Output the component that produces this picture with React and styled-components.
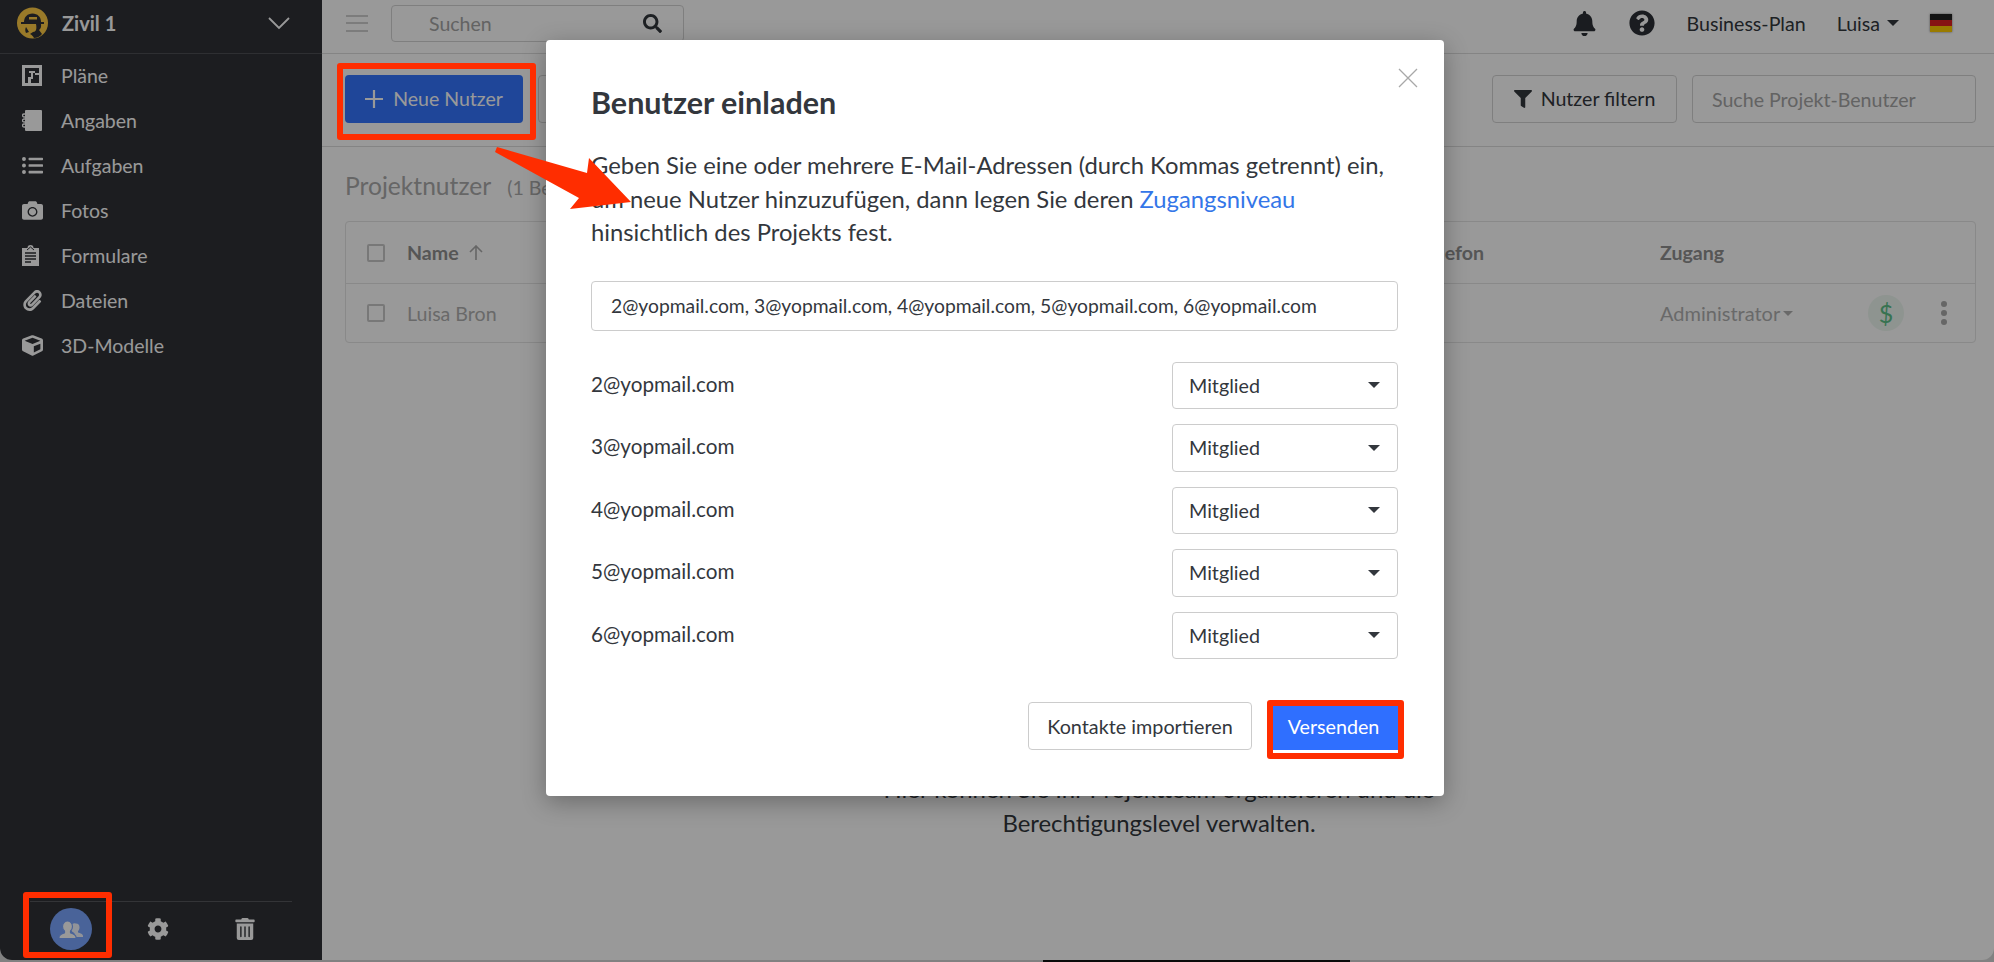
import React from 'react';
import styled, { createGlobalStyle } from 'styled-components';
import { FaCamera, FaListUl, FaPaperclip, FaCube, FaBell, FaQuestionCircle, FaFilter, FaSearch, FaCog, FaTrashAlt } from 'react-icons/fa';

const Global = createGlobalStyle`
  html, body { margin: 0; padding: 0; height: 100%; background: #d8d8d8; overflow: hidden; }
  * { box-sizing: border-box; }
  body { font-family: Lato, "Noto Sans", sans-serif; color: #33373d; }
`;

const Screen = styled.div`
  position: relative;
  width: 1994px;
  height: 962px;
  overflow: hidden;
`;
const Window = styled.div`
  display: flex;
  height: 960px;
  background: #fff;
  border-radius: 0 0 12px 12px;
  overflow: hidden;
`;
const BottomStrip = styled.div`
  height: 2px;
  padding-left: 1043px;
`;
const BottomSegment = styled.div`
  width: 307px;
  height: 2px;
  background: #111;
`;

const Sidebar = styled.aside`
  width: 322px;
  flex: none;
  background: #2f3136;
  color: #fff;
  display: flex;
  flex-direction: column;
`;
const SideHead = styled.div`
  height: 54px;
  flex: none;
  display: flex;
  align-items: center;
  padding: 0 32px 7px 17px;
  border-bottom: 1px solid #4d4f54;
`;
const ProjectName = styled.div`
  margin-left: 14px;
  flex: 1;
  font-size: 20px;
  font-weight: 700;
`;
const Menu = styled.nav`
  display: flex;
  flex-direction: column;
  flex: 1;
  margin-top: -1px;
`;
const MenuItem = styled.div`
  height: 45px;
  display: flex;
  align-items: center;
  font-size: 19.5px;
`;
const MenuIcon = styled.span`
  width: 61px;
  padding-left: 22px;
  display: flex;
  align-items: center;
  font-size: 21px;
`;
const SideFoot = styled.div`
  margin: 0 30px 1px;
  height: 58px;
  padding-bottom: 3px;
  border-top: 1px solid #55575c;
  display: flex;
  align-items: center;
`;
const FootSlot = styled.div`
  width: 87px;
  margin-left: ${p => p.$first ? '-3px' : '0'};
  display: flex;
  justify-content: center;
  font-size: 22px;
`;
const AvatarCircle = styled.div`
  width: 42px;
  height: 42px;
  border-radius: 50%;
  background: #7aa5ff;
  display: flex;
  align-items: center;
  justify-content: center;
`;

const Main = styled.main`
  flex: 1;
  min-width: 0;
  display: flex;
  flex-direction: column;
`;
const TopBar = styled.header`
  height: 54px;
  flex: none;
  display: flex;
  align-items: center;
  padding: 0 42px 7px 24px;
  border-bottom: 1px solid #dcdcdc;
`;
const Burger = styled.div`
  width: 22px;
  height: 17px;
  border-top: 2px solid #cfcfcf;
  border-bottom: 2px solid #cfcfcf;
  position: relative;
  &::after {
    content: '';
    position: absolute;
    left: 0;
    right: 0;
    top: 5.5px;
    height: 2px;
    background: #cfcfcf;
  }
`;
const TopSearch = styled.div`
  margin-left: 23px;
  width: 293px;
  height: 37px;
  border: 1px solid #d4d4d4;
  border-radius: 4px;
  display: flex;
  align-items: center;
  justify-content: space-between;
  padding: 0 21px 0 37px;
  font-size: 19.5px;
  color: #a5a5a5;
  background: #fff;
  svg { color: #33373d; font-size: 19px; }
`;
const Spacer = styled.div`
  flex: 1;
`;
const TopIcon = styled.span`
  display: flex;
  color: #2c3036;
  font-size: ${p => p.$size}px;
  margin-right: ${p => p.$gap}px;
`;
const TopLink = styled.span`
  font-size: 19.6px;
  color: #33373d;
  display: flex;
  align-items: center;
  margin-right: ${p => p.$gap || 0}px;
`;
const Caret = styled.span`
  display: inline-block;
  width: 0;
  height: 0;
  border-left: ${p => p.$size || 6}px solid transparent;
  border-right: ${p => p.$size || 6}px solid transparent;
  border-top: ${p => p.$size || 6}px solid ${p => p.$color || '#33373d'};
  margin-left: ${p => p.$gap ?? 7}px;
`;
const Flag = styled.div`
  width: 22px;
  height: 18px;
  margin-left: 31px;
  background: linear-gradient(#222 0 33%, #e02020 33% 66%, #ffce00 66%);
  box-shadow: 0 0 2px rgba(0,0,0,.5);
`;

const Toolbar = styled.div`
  height: 93px;
  flex: none;
  display: flex;
  align-items: center;
  padding: 0 18px 3px 23px;
  border-bottom: 1px solid #dcdcdc;
`;
const PrimaryBtn = styled.div`
  height: 48px;
  width: 178px;
  border-radius: 4px;
  background: #3476ff;
  color: #fff;
  font-size: 19.5px;
  display: flex;
  align-items: center;
  justify-content: center;
  gap: 10px;
`;
const OutlineBtn = styled.div`
  height: 48px;
  width: 185px;
  border: 1px solid #d4d4d4;
  border-radius: 4px;
  display: flex;
  align-items: center;
  justify-content: center;
  gap: 9px;
  font-size: 19.6px;
  color: #33373d;
  margin-left: ${p => p.$gap || 0}px;
`;
const SearchField = styled.div`
  width: 284px;
  height: 48px;
  margin-left: 15px;
  border: 1px solid #d4d4d4;
  border-radius: 4px;
  display: flex;
  align-items: center;
  padding: 2px 19px 0;
  font-size: 19.6px;
  color: #a5a5a5;
`;

const Content = styled.div`
  flex: 1;
  padding: 0 18px 0 23px;
  display: flex;
  flex-direction: column;
`;
const SectionHead = styled.div`
  height: 74px;
  display: flex;
  align-items: center;
  padding-top: 3px;
`;
const SectionTitle = styled.div`
  font-size: 24.6px;
  color: #aaa;
`;
const SectionCount = styled.div`
  font-size: 19.6px;
  color: #aaa;
  margin-left: 16px;
  padding-top: 3px;
`;
const Table = styled.div`
  border: 1px solid #e4e4e4;
  border-radius: 4px;
`;
const TableRow = styled.div`
  display: grid;
  grid-template-columns: 61px 1013px 240px 1fr;
  align-items: center;
  height: ${p => p.$h}px;
  font-size: 19.6px;
  color: ${p => p.$head ? '#8f8f8f' : '#b0b0b0'};
  font-weight: ${p => p.$head ? 700 : 400};
  border-bottom: ${p => p.$head ? '1px solid #e4e4e4' : 'none'};
`;
const Check = styled.div`
  width: 18px;
  height: 18px;
  margin-left: 21px;
  border: 2px solid #c8c8c8;
  border-radius: 2px;
`;
const NameCell = styled.div`
  display: flex;
  align-items: center;
  gap: 10px;
`;
const AccessCell = styled.div`
  display: flex;
  align-items: center;
`;
const AccessLabel = styled.div`
  width: 208px;
  display: flex;
  align-items: center;
  font-weight: 400;
  font-size: 20px;
`;
const DollarBadge = styled.div`
  width: 36px;
  height: 36px;
  border-radius: 50%;
  background: #edf7f0;
  color: #5cc088;
  display: flex;
  align-items: center;
  justify-content: center;
  font-size: 25px;
`;
const Dots = styled.div`
  margin-left: 37px;
  display: flex;
  flex-direction: column;
  gap: 3px;
`;
const Dot = styled.span`
  width: 6px;
  height: 6px;
  border-radius: 50%;
  background: #aaa;
`;
const EmptyText = styled.div`
  margin-top: 429px;
  margin-left: 464px;
  width: 700px;
  text-align: center;
  font-size: 23.9px;
  line-height: 34px;
  color: #33373d;
`;

const Overlay = styled.div`
  position: absolute;
  inset: 0;
  background: rgba(0,0,0,.4);
`;
const Modal = styled.div`
  position: absolute;
  left: 546px;
  top: 40px;
  width: 898px;
  height: 756px;
  background: #fff;
  border-radius: 4px;
  box-shadow: 0 6px 24px rgba(0,0,0,.3);
  padding: 45px 46px 0 45px;
  display: flex;
  flex-direction: column;
`;
const CloseBtn = styled.div`
  position: absolute;
  top: 28px;
  right: 26px;
  display: flex;
`;
const ModalTitle = styled.h2`
  margin: 0;
  font-size: 30.5px;
  line-height: 34px;
  font-weight: 700;
  color: #33373d;
`;
const ModalText = styled.p`
  margin: 30px 0 0;
  font-size: 23.8px;
  line-height: 33.5px;
  color: #33373d;
`;
const ModalLink = styled.span`
  color: #3476e8;
`;
const EmailInput = styled.div`
  margin-top: 31px;
  height: 50px;
  border: 1px solid #ccc;
  border-radius: 4px;
  padding: 0 19px;
  display: flex;
  align-items: center;
  font-size: 19.3px;
  color: #33373d;
`;
const Rows = styled.div`
  margin-top: 31px;
  display: flex;
  flex-direction: column;
  gap: 15px;
`;
const InviteRow = styled.div`
  display: flex;
  align-items: center;
  justify-content: space-between;
  height: 47.5px;
  font-size: 20.7px;
`;
const InviteEmail = styled.span`
  padding-bottom: 3px;
`;
const RoleSelect = styled.div`
  width: 226px;
  height: 100%;
  border: 1px solid #ccc;
  border-radius: 4px;
  display: flex;
  align-items: center;
  justify-content: space-between;
  padding: 0 17px 0 16px;
  font-size: 19.7px;
`;
const Footer = styled.div`
  margin-top: 43px;
  display: flex;
  justify-content: flex-end;
  align-items: center;
  gap: 21px;
`;
const GhostBtn = styled.div`
  width: 224px;
  height: 48px;
  border: 1px solid #ccc;
  border-radius: 4px;
  display: flex;
  align-items: center;
  justify-content: center;
  font-size: 19.8px;
`;
const SendBtn = styled.div`
  width: 125px;
  height: 47px;
  padding-right: 4px;
  background: #2f6fff;
  color: #fff;
  display: flex;
  align-items: center;
  justify-content: center;
  font-size: 19.7px;
`;
const Highlight = styled.div`
  position: absolute;
  left: ${p => p.$x}px;
  top: ${p => p.$y}px;
  width: ${p => p.$w}px;
  height: ${p => p.$h}px;
  border: 6px solid #ff2d00;
  border-radius: 3px;
  pointer-events: none;
`;
const Arrow = styled.svg`
  position: absolute;
  left: 0;
  top: 0;
  pointer-events: none;
`;

const Logo = () => (
  <svg width="31" height="32" viewBox="0 0 31 32">
    <circle cx="15.5" cy="16" r="15.5" fill="#ffcb45" />
    <path d="M7 15c0-5 3.500-8.500 8.500-8.500S24 10 24 15z" fill="#2f3136" />
    <path d="M4 15h23v2H4z" fill="#2f3136" />
    <path d="M12 10h8v2.500h-8z" fill="#ffcb45" />
    <path d="M19 17h5c.5 3-.5 5-2 6l3 4c-2 2.500-5 4-8 4-1-2-2-3-4-4l3-2c3 0 4-3 3-8z" fill="#2f3136" />
    <path d="M9 20l3 5-3 1c-1-2-1-4 0-6z" fill="#2f3136" />
  </svg>
);
const Chevron = () => (
  <svg width="22" height="13" viewBox="0 0 22 13" fill="none" stroke="#fff" strokeWidth="1.800">
    <path d="M1 1l10 10L21 1" />
  </svg>
);
const PlanIcon = () => (
  <svg width="20" height="21" viewBox="0 0 20 21">
    <path fillRule="evenodd" fill="#fff" d="M0 0h20v21H0zM3 3v15h3v-6h3v6h8V10h-4V8h4V3z" />
    <path fill="#fff" d="M7 6h6v2h-2v6H9V8H7z" />
  </svg>
);
const NoteIcon = () => (
  <svg width="20" height="21" viewBox="0 0 20 21">
    <path fill="#fff" d="M3 1a1 1 0 0 1 1-1h15a1 1 0 0 1 1 1v19a1 1 0 0 1-1 1H4a1 1 0 0 1-1-1z" />
    <path fill="none" stroke="#fff" strokeWidth="1.300" d="M5 4H2a1 1 0 0 0 0 3h3M5 9H2a1 1 0 0 0 0 3h3M5 14H2a1 1 0 0 0 0 3h3" />
  </svg>
);
const ClipboardIcon = () => (
  <svg width="17" height="21" viewBox="0 0 17 21">
    <path fill="#fff" d="M0 3h5.500a3 3 0 0 1 6 0H17v18H0z" />
    <path stroke="#2f3136" strokeWidth="1.300" d="M3 8h11M3 11h11M3 14h11M3 17h6" />
    <path stroke="#2f3136" strokeWidth="1" fill="none" d="M5 5l3.500-3 3.500 3" />
  </svg>
);
const UsersIcon = () => (
  <svg width="26" height="19" viewBox="0 0 26 19" fill="#fff">
    <path d="M18 3.500a3.500 4 0 0 1 3.500 4c0 1.500-.6 2.800-1.500 3.600v1.300c2.500.8 5 1.400 5 3.600v1H17v-2c0-1.800-1.200-2.800-3-3.600V11c-.8-.8-1.300-2.100-1.300-3.500A4 4 0 0 1 18 3.500z" opacity=".9" />
    <path stroke="#7aa5ff" strokeWidth="1.200" d="M9.500 1A5 5.500 0 0 1 14.500 6.500c0 2-.8 3.600-2 4.500v1.800c3 1 5.500 1.800 5.500 4.200v1.500H1V17c0-2.400 2.500-3.200 5.500-4.200V11c-1.200-.9-2-2.500-2-4.500A5 5.500 0 0 1 9.500 1z" />
  </svg>
);
const CloseIcon = () => (
  <svg width="20" height="20" viewBox="0 0 20 20" stroke="#a8a8a8" strokeWidth="1.300">
    <path d="M1 1l18 18M19 1L1 19" />
  </svg>
);
const UpArrow = () => (
  <svg width="14" height="15" viewBox="0 0 14 15" fill="none" stroke="#aaa" strokeWidth="1.600">
    <path d="M7 15V1M1 7l6-6 6 6" />
  </svg>
);
const PlusIcon = () => (
  <svg width="18" height="18" viewBox="0 0 18 18" stroke="#fff" strokeWidth="2.200">
    <path d="M9 0v18M0 9h18" />
  </svg>
);

const menu = [
  ['Pläne', <PlanIcon />],
  ['Angaben', <NoteIcon />],
  ['Aufgaben', <FaListUl />],
  ['Fotos', <FaCamera />],
  ['Formulare', <ClipboardIcon />],
  ['Dateien', <FaPaperclip />],
  ['3D-Modelle', <FaCube />],
];
const emails = ['2@yopmail.com', '3@yopmail.com', '4@yopmail.com', '5@yopmail.com', '6@yopmail.com'];

export default function App() {
  return (
    <>
      <Global />
      <Screen>
        <Window>
          <Sidebar>
            <SideHead>
              <Logo />
              <ProjectName>Zivil 1</ProjectName>
              <Chevron />
            </SideHead>
            <Menu>
              {menu.map(([label, icon]) => (
                <MenuItem key={label}>
                  <MenuIcon>{icon}</MenuIcon>
                  {label}
                </MenuItem>
              ))}
            </Menu>
            <SideFoot>
              <FootSlot $first><AvatarCircle><UsersIcon /></AvatarCircle></FootSlot>
              <FootSlot><FaCog /></FootSlot>
              <FootSlot><FaTrashAlt /></FootSlot>
            </SideFoot>
          </Sidebar>
          <Main>
            <TopBar>
              <Burger />
              <TopSearch>Suchen<FaSearch /></TopSearch>
              <Spacer />
              <TopIcon $size={25} $gap={32}><FaBell /></TopIcon>
              <TopIcon $size={26} $gap={32}><FaQuestionCircle /></TopIcon>
              <TopLink $gap={31}>Business-Plan</TopLink>
              <TopLink>Luisa<Caret /></TopLink>
              <Flag />
            </TopBar>
            <Toolbar>
              <PrimaryBtn><PlusIcon />Neue Nutzer</PrimaryBtn>
              <OutlineBtn $gap={15}>Kontakte</OutlineBtn>
              <Spacer />
              <OutlineBtn><FaFilter size={18} />Nutzer filtern</OutlineBtn>
              <SearchField>Suche Projekt-Benutzer</SearchField>
            </Toolbar>
            <Content>
              <SectionHead>
                <SectionTitle>Projektnutzer</SectionTitle>
                <SectionCount>(1 Benutzer)</SectionCount>
              </SectionHead>
              <Table>
                <TableRow $head $h={62}>
                  <Check />
                  <NameCell>Name <UpArrow /></NameCell>
                  <div>Telefon</div>
                  <div>Zugang</div>
                </TableRow>
                <TableRow $h={58}>
                  <Check />
                  <div>Luisa Bron</div>
                  <div />
                  <AccessCell>
                    <AccessLabel>Administrator<Caret $color="#b0b0b0" $gap={3} $size={5.5} /></AccessLabel>
                    <DollarBadge>$</DollarBadge>
                    <Dots><Dot /><Dot /><Dot /></Dots>
                  </AccessCell>
                </TableRow>
              </Table>
              <EmptyText>
                Hier können Sie Ihr Projektteam organisieren und die<br />Berechtigungslevel verwalten.
              </EmptyText>
            </Content>
          </Main>
        </Window>
        <BottomStrip><BottomSegment /></BottomStrip>
        <Overlay />
        <Modal>
          <CloseBtn><CloseIcon /></CloseBtn>
          <ModalTitle>Benutzer einladen</ModalTitle>
          <ModalText>
            Geben Sie eine oder mehrere E-Mail-Adressen (durch Kommas getrennt) ein, um neue Nutzer hinzuzufügen, dann legen Sie deren <ModalLink>Zugangsniveau</ModalLink> hinsichtlich des Projekts fest.
          </ModalText>
          <EmailInput>2@yopmail.com, 3@yopmail.com, 4@yopmail.com, 5@yopmail.com, 6@yopmail.com</EmailInput>
          <Rows>
            {emails.map(e => (
              <InviteRow key={e}>
                <InviteEmail>{e}</InviteEmail>
                <RoleSelect>Mitglied<Caret $gap={0} /></RoleSelect>
              </InviteRow>
            ))}
          </Rows>
          <Footer>
            <GhostBtn>Kontakte importieren</GhostBtn>
            <SendBtn>Versenden</SendBtn>
          </Footer>
        </Modal>
        <Highlight $x={337} $y={63} $w={199} $h={77} />
        <Highlight $x={23} $y={892} $w={89} $h={66} />
        <Highlight $x={1267} $y={700} $w={137} $h={59} />
        <Arrow width="1994" height="962" viewBox="0 0 1994 962">
          <path fill="#ff2d00" d="M497 147 L587 173 L589 158 L631 202 L570 209 L579 198 L495 152 Z" />
        </Arrow>
      </Screen>
    </>
  );
}
